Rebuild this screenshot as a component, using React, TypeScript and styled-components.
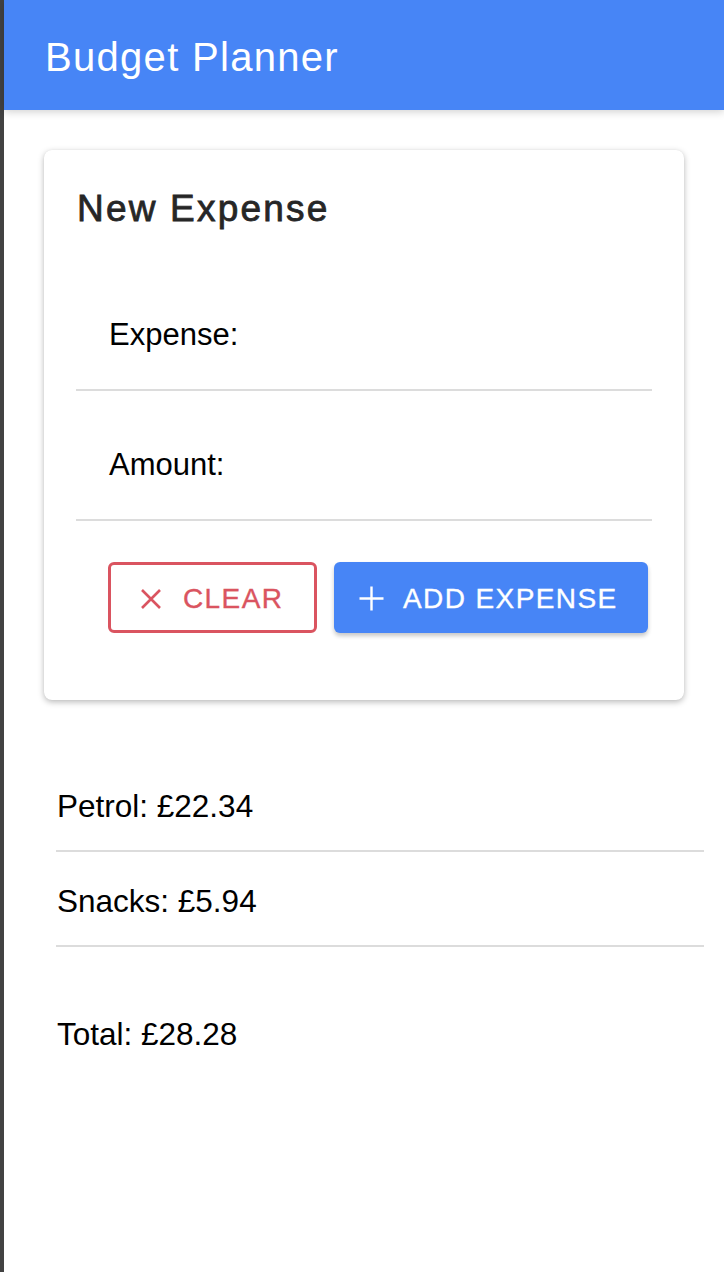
import React from "react";
import styled, { createGlobalStyle } from "styled-components";

const GlobalStyle = createGlobalStyle`
  html, body {
    margin: 0;
    padding: 0;
    background: #ffffff;
    font-family: "Liberation Sans", Arial, Helvetica, sans-serif;
  }
  * { box-sizing: border-box; }
`;

const Shell = styled.div`
  display: flex;
  min-height: 1272px;
  background: #ffffff;
`;

const EdgeStrip = styled.div`
  width: 4px;
  flex: 0 0 4px;
  background: #424242;
`;

const Main = styled.div`
  flex: 1;
  display: flex;
  flex-direction: column;
  min-width: 0;
`;

const Header = styled.header`
  height: 110px;
  background: #4785f6;
  display: flex;
  align-items: center;
  padding: 4px 0 0 41px;
  box-shadow: 0 2px 8px rgba(0, 0, 0, 0.18);
  position: relative;
  z-index: 1;
`;

const HeaderTitle = styled.h1`
  margin: 0;
  color: #ffffff;
  font-size: 40px;
  font-weight: 400;
  letter-spacing: 1.3px;
  line-height: 48px;
`;

const Content = styled.div`
  display: flex;
  flex-direction: column;
  padding: 40px 20px 0 40px;
`;

const Card = styled.section`
  width: 640px;
  background: #ffffff;
  border-radius: 8px;
  box-shadow: 0 2px 6px rgba(0, 0, 0, 0.28), 0 0 1px rgba(0, 0, 0, 0.08);
  padding: 39px 32px 67px 32px;
  display: flex;
  flex-direction: column;
`;

const CardTitle = styled.h2`
  margin: 0 0 32px 1px;
  font-size: 37px;
  font-weight: 400;
  letter-spacing: 2.2px;
  line-height: 40px;
  color: #262626;
  -webkit-text-stroke: 0.8px #262626;
`;

const FieldRow = styled.div`
  height: 130px;
  border-bottom: 2px solid #dcdcdc;
  padding: 56px 0 0 33px;
`;

const FieldLabel = styled.label`
  display: block;
  font-size: 31px;
  line-height: 36px;
  color: #000000;
`;

const ButtonRow = styled.div`
  display: flex;
  gap: 17px;
  margin-top: 41px;
  padding-left: 32px;
`;

const BaseButton = styled.button`
  display: flex;
  align-items: center;
  height: 71px;
  border-radius: 6px;
  font-family: "Liberation Sans", Arial, Helvetica, sans-serif;
  font-size: 28px;
  letter-spacing: 1.4px;
  text-transform: uppercase;
  cursor: pointer;
  -webkit-text-stroke: 0.35px currentColor;
`;

const ClearButton = styled(BaseButton)`
  width: 209px;
  background: #ffffff;
  border: 3px solid #da5460;
  color: #da5460;
  padding: 2px 0 0 29px;
  gap: 21px;
`;

const AddButton = styled(BaseButton)`
  width: 314px;
  background: #4785f6;
  border: none;
  color: #ffffff;
  padding: 2px 0 0 25px;
  gap: 19px;
  box-shadow: 0 3px 4px rgba(0, 0, 0, 0.22);
`;

const IconSvg = styled.svg`
  flex: 0 0 auto;
  display: block;
`;

const CloseIcon = () => (
  <IconSvg width="22" height="22" viewBox="0 0 22 22">
    <path d="M2 2 L20 20 M20 2 L2 20" stroke="#da5460" strokeWidth="2.6" strokeLinecap="butt" fill="none" />
  </IconSvg>
);

const PlusIcon = () => (
  <IconSvg width="25" height="25" viewBox="0 0 25 25">
    <path d="M12.5 0.5 V24.5 M0.5 12.5 H24.5" stroke="#ffffff" strokeWidth="2.4" fill="none" />
  </IconSvg>
);

const ExpenseList = styled.ul`
  list-style: none;
  margin: 57px 20px 0 52px;
  padding: 0;
`;

const ExpenseItem = styled.li`
  height: 95px;
  border-bottom: 2px solid #dcdcdc;
  padding: 31px 0 0 1px;
  font-size: 31.5px;
  line-height: 36px;
  color: #000000;
`;

const Total = styled.p`
  margin: 69px 0 0 53px;
  font-size: 31.5px;
  line-height: 36px;
  color: #000000;
`;

const expenses = [
  { name: "Petrol", amount: 22.34 },
  { name: "Snacks", amount: 5.94 },
];

export default function App() {
  const total = expenses.reduce((s, e) => s + e.amount, 0);
  return (
    <>
      <GlobalStyle />
      <Shell>
        <EdgeStrip />
        <Main>
          <Header>
            <HeaderTitle>Budget Planner</HeaderTitle>
          </Header>
          <Content>
            <Card>
              <CardTitle>New Expense</CardTitle>
              <FieldRow>
                <FieldLabel>Expense:</FieldLabel>
              </FieldRow>
              <FieldRow>
                <FieldLabel>Amount:</FieldLabel>
              </FieldRow>
              <ButtonRow>
                <ClearButton>
                  <CloseIcon />
                  Clear
                </ClearButton>
                <AddButton>
                  <PlusIcon />
                  Add Expense
                </AddButton>
              </ButtonRow>
            </Card>
          </Content>
          <ExpenseList>
            {expenses.map((e) => (
              <ExpenseItem key={e.name}>
                {e.name}: £{e.amount.toFixed(2)}
              </ExpenseItem>
            ))}
          </ExpenseList>
          <Total>Total: £{total.toFixed(2)}</Total>
        </Main>
      </Shell>
    </>
  );
}
